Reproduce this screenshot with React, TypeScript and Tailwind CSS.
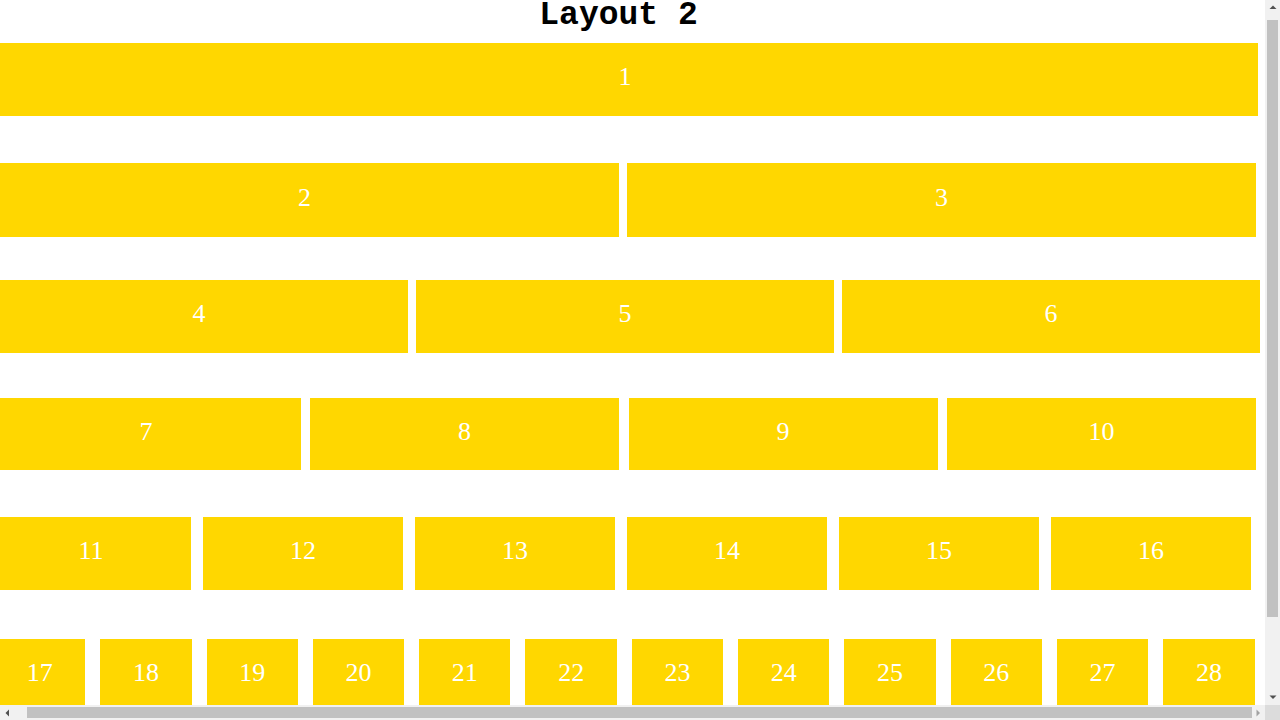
import React from "react";

type Row = {
  cls: string;
  box: string;
  items: number[];
};

const range = (a: number, b: number) => {
  const r: number[] = [];
  for (let i = a; i <= b; i++) r.push(i);
  return r;
};

const rows: Row[] = [
  { cls: "mt-[9px] h-[73px] pl-[5px] gap-[0px]", box: "w-[1266px]", items: [1] },
  { cls: "mt-[47px] h-[74px] pl-[3px] gap-[8px]", box: "w-[629px]", items: [2, 3] },
  { cls: "mt-[43px] h-[73px] pl-[3px] gap-[8px]", box: "w-[418px]", items: [4, 5, 6] },
  { cls: "mt-[45px] h-[72px] pl-[4.5px] gap-[9.5px]", box: "w-[309px]", items: range(7, 10) },
  { cls: "mt-[47px] h-[73px] pl-[4px] gap-[12px]", box: "w-[200px]", items: range(11, 16) },
  { cls: "mt-[49px] h-[73px] pl-[7px] gap-[15px]", box: "w-[91.3px]", items: range(17, 28) },
];

const Tri = ({ dir, color }: { dir: "up" | "down" | "left" | "right"; color: string }) => {
  const pts: Record<string, string> = {
    up: "3.5,5 7,1.5 10.5,5",
    down: "3.5,1.5 7,5 10.5,1.5",
    left: "5,3.5 1.5,7 5,10.5",
    right: "1.5,3.5 5,7 1.5,10.5",
  };
  const vb = dir === "up" || dir === "down" ? "0 0 14 7" : "0 0 7 14";
  const size = dir === "up" || dir === "down" ? "w-[14px] h-[7px]" : "w-[7px] h-[14px]";
  return (
    <svg viewBox={vb} className={size}>
      <polygon points={pts[dir]} fill={color} />
    </svg>
  );
};

export default function App() {
  return (
    <div className="relative h-screen w-full overflow-hidden bg-white">
      <div className="ml-[-13px] mt-[-7px] w-[1266px] pb-[99px]">
        <h1
          className="mt-[5px] pr-[3px] text-center text-[33px] leading-[36px] font-bold text-black"
          style={{ fontFamily: '"Liberation Mono", "Courier New", monospace' }}
        >
          Layout 2
        </h1>
        {rows.map((row, i) => (
          <div key={i} className={`flex w-[1279px] ${row.cls}`}>
            {row.items.map((n) => (
              <div
                key={n}
                className={`${row.box} shrink-0 h-full bg-[#ffd700] flex items-center justify-center pb-[6px] text-white text-[26px]`}
                style={{ fontFamily: '"Liberation Serif", "Times New Roman", serif' }}
              >
                {n}
              </div>
            ))}
          </div>
        ))}
      </div>

      {/* vertical scrollbar */}
      <div className="fixed right-0 top-0 flex h-[705px] w-[15px] flex-col bg-[#f1f1f1]">
        <div className="flex h-[15px] items-center justify-center">
          <Tri dir="up" color="#505050" />
        </div>
        <div className="mt-[5px] mx-[2px] h-[597px] bg-[#c1c1c1]" />
        <div className="flex-1" />
        <div className="flex h-[15px] items-center justify-center">
          <Tri dir="down" color="#505050" />
        </div>
      </div>

      {/* horizontal scrollbar */}
      <div className="fixed bottom-0 left-0 flex h-[15px] w-[1265px] bg-[#f1f1f1]">
        <div className="flex w-[15px] items-center justify-center">
          <Tri dir="left" color="#505050" />
        </div>
        <div className="ml-[12px] my-[2px] w-[1225px] bg-[#c1c1c1]" />
        <div className="flex-1" />
        <div className="flex w-[13px] items-center justify-center">
          <Tri dir="right" color="#a3a3a3" />
        </div>
      </div>
      <div className="fixed bottom-0 right-0 h-[15px] w-[15px] bg-[#dcdcdc]" />
    </div>
  );
}
